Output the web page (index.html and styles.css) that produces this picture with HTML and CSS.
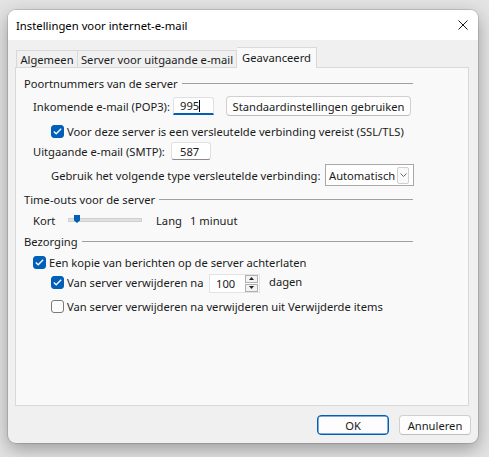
FILE: index.html
```html
<!DOCTYPE html>
<html lang="nl">
<head>
<meta charset="utf-8">
<title>Instellingen voor internet-e-mail</title>
<link rel="stylesheet" href="styles.css">
</head>
<body>
<div class="window">
  <div class="titlebar">
    <span class="title">Instellingen voor internet-e-mail</span>
    <svg class="close" width="10" height="10" viewBox="0 0 10 10"><path d="M0.5 0.5 L9.5 9.5 M9.5 0.5 L0.5 9.5" stroke="#1a1a1a" stroke-width="1"/></svg>
  </div>
  <div class="content">
    <div class="tabs">
      <div class="tab t1">Algemeen</div>
      <div class="tab t2">Server voor uitgaande e-mail</div>
      <div class="tab t3 selected">Geavanceerd</div>
    </div>
    <div class="panel">
      <div class="row h16 group"><span class="glabel">Poortnummers van de server</span><span class="gline"></span></div>
      <div class="row h30 ind1">
        <span class="lbl w140">Inkomende e-mail (POP3):</span>
        <span class="input focus">995<span class="caret"></span></span>
        <span class="btn std">Standaardinstellingen gebruiken</span>
      </div>
      <div class="row h20 ind2">
        <span class="cb checked"><svg width="9" height="7" viewBox="0 0 9 7"><path d="M0.8 3.6 L3.2 5.8 L8.2 0.8" fill="none" stroke="#fff" stroke-width="1.3"/></svg></span>
        <span>Voor deze server is een versleutelde verbinding vereist (SSL/TLS)</span>
      </div>
      <div class="row h20 ind1">
        <span class="lbl w138">Uitgaande e-mail (SMTP):</span>
        <span class="input plain">587</span>
      </div>
      <div class="row h28 ind2">
        <span class="lbl w274">Gebruik het volgende type versleutelde verbinding:</span>
        <span class="select">Automatisch<span class="arrow"><svg width="7" height="4" viewBox="0 0 7 4"><path d="M0.5 0.5 L3.5 3.5 L6.5 0.5" fill="none" stroke="#555" stroke-width="0.9"/></svg></span></span>
      </div>
      <div class="row h21 group"><span class="glabel">Time-outs voor de server</span><span class="gline"></span></div>
      <div class="row h20 ind1">
        <span class="lbl w35">Kort</span>
        <span class="slider"><span class="thumb"></span></span>
        <span class="lbl w34">Lang</span>
        <span>1 minuut</span>
      </div>
      <div class="row h23 group"><span class="glabel">Bezorging</span><span class="gline"></span></div>
      <div class="row h18 ind1">
        <span class="cb checked"><svg width="9" height="7" viewBox="0 0 9 7"><path d="M0.8 3.6 L3.2 5.8 L8.2 0.8" fill="none" stroke="#fff" stroke-width="1.3"/></svg></span>
        <span>Een kopie van berichten op de server achterlaten</span>
      </div>
      <div class="row h22 ind2">
        <span class="cb checked"><svg width="9" height="7" viewBox="0 0 9 7"><path d="M0.8 3.6 L3.2 5.8 L8.2 0.8" fill="none" stroke="#fff" stroke-width="1.3"/></svg></span>
        <span class="lbl w142">Van server verwijderen na</span>
        <span class="spin"><span class="spinval">100</span><span class="spinbtns"><span class="sb"><svg width="5" height="3" viewBox="0 0 5 3"><path d="M0 3 L2.5 0 L5 3Z" fill="#222"/></svg></span><span class="sb"><svg width="5" height="3" viewBox="0 0 5 3"><path d="M0 0 L2.5 3 L5 0Z" fill="#222"/></svg></span></span></span>
        <span class="dagen">dagen</span>
      </div>
      <div class="row h26 ind2">
        <span class="cb"></span>
        <span>Van server verwijderen na verwijderen uit Verwijderde items</span>
      </div>
    </div>
    <div class="footer">
      <span class="btn ok">OK</span>
      <span class="btn">Annuleren</span>
    </div>
  </div>
</div>
</body>
</html>
```

FILE: styles.css
```css
html, body {
  margin: 0;
  padding: 0;
}
body {
  background: #e3e3e3;
  width: 489px;
  height: 457px;
  overflow: hidden;
  font-family: "Noto Sans", "Liberation Sans", sans-serif;
  font-size: 11.2px;
  color: #1a1a1a;
}
.window {
  margin: 10px 0 0 8px;
  width: 470px;
  height: 433px;
  border-radius: 8px;
  overflow: hidden;
  background: #f0f0f0;
  box-shadow: 0 6px 18px rgba(0,0,0,0.32), 0 0 0 1px rgba(0,0,0,0.12);
  display: flex;
  flex-direction: column;
}
.titlebar {
  height: 30px;
  background: #ffffff;
  display: flex;
  align-items: center;
  padding-left: 8px;
  padding-right: 10px;
  flex-shrink: 0;
}
.title {
  flex: 1;
  color: #000;
  font-size: 11.3px;
}
.content {
  display: flex;
  flex-direction: column;
  padding: 7px 9px 0 7px;
}
.tabs {
  display: flex;
  align-items: flex-end;
  height: 20px;
  padding-left: 1px;
}
.tab {
  box-sizing: border-box;
  height: 17px;
  border: 1px solid #d9d9d9;
  border-bottom: none;
  background: #f0f0f0;
  display: flex;
  align-items: center;
  justify-content: center;
  white-space: nowrap;
  color: #1a1a1a;
}
.t1 { width: 62px; }
.t2 { width: 159px; border-left: none; }
.t3 { width: 80px; }
.tab.selected {
  height: 21px;
  background: #f9f9f9;
  margin-bottom: -1px;
  position: relative;
  z-index: 1;
  border-left: none;
  padding-bottom: 2px;
}
.panel {
  box-sizing: border-box;
  height: 339px;
  border: 1px solid #d9d9d9;
  background: #f9f9f9;
  padding: 7px 0 0 8px;
}
.row {
  display: flex;
  align-items: center;
  white-space: nowrap;
}
.h16 { height: 16px; }
.h18 { height: 18px; }
.h20 { height: 20px; }
.h21 { height: 21px; }
.h22 { height: 22px; }
.h23 { height: 23px; }
.h26 { height: 26px; }
.h28 { height: 28px; }
.h30 { height: 30px; }
.ind1 { padding-left: 9px; }
.ind2 { padding-left: 27px; }
.group {
  width: 389px;
}
.gline {
  flex: 1;
  height: 1px;
  background: #a0a0a0;
  margin-left: 4px;
}
.lbl { display: inline-block; }
.w34 { width: 34px; }
.w35 { width: 35px; }
.w138 { width: 138px; }
.w140 { width: 140px; }
.w142 { width: 142px; }
.w274 { width: 274px; }
.input {
  box-sizing: border-box;
  height: 18px;
  background: #fff;
  border: 1px solid #e0e0e0;
  border-bottom: 1px solid #8a8a8a;
  border-radius: 3px;
  display: flex;
  align-items: center;
  padding-left: 6px;
  color: #1a1a1a;
}
.input.focus {
  width: 41px;
  border-bottom: 2px solid #005fb8;
  border-radius: 3px 3px 0 0;
}
.input.plain { width: 40px; padding-left: 8px; }
.caret {
  display: inline-block;
  width: 1px;
  height: 12px;
  background: #000;
}
.btn {
  box-sizing: border-box;
  height: 20px;
  background: #fdfdfd;
  border: 1px solid #d0d0d0;
  border-bottom-color: #bdbdbd;
  border-radius: 4px;
  display: flex;
  align-items: center;
  justify-content: center;
  color: #1a1a1a;
  width: 72px;
}
.btn.std {
  width: 185px;
  margin-left: 12px;
}
.cb {
  box-sizing: border-box;
  width: 13px;
  height: 13px;
  border-radius: 3px;
  border: 1px solid #7a7a7a;
  background: #fcfcfc;
  display: flex;
  align-items: center;
  justify-content: center;
  margin-right: 3px;
  flex-shrink: 0;
}
.cb.checked {
  background: #005fb8;
  border-color: #005fb8;
}
.select {
  box-sizing: border-box;
  width: 89px;
  height: 22px;
  border: 1px solid #a8a8a8;
  background: #fff;
  display: flex;
  align-items: center;
  padding-left: 3px;
  padding-right: 4px;
  justify-content: space-between;
  color: #1a1a1a;
}
.arrow {
  box-sizing: border-box;
  width: 12px;
  height: 17px;
  border: 1px solid #d0d0d0;
  border-radius: 2px;
  display: flex;
  align-items: center;
  justify-content: center;
  background: #fafafa;
}
.slider {
  position: relative;
  box-sizing: border-box;
  width: 74px;
  height: 4px;
  background: #e0e0e0;
  border: 1px solid #d0d0d0;
  margin-right: 14px;
}
.thumb {
  position: absolute;
  left: 5px;
  top: -4px;
  width: 6px;
  height: 8px;
  background: #005fb8;
  clip-path: polygon(0 0, 100% 0, 100% 70%, 50% 100%, 0 70%);
}
.spin {
  box-sizing: border-box;
  width: 51px;
  height: 19px;
  background: #fff;
  border: 1px solid #e3e3e3;
  display: flex;
  align-items: center;
  justify-content: space-between;
  padding-left: 6px;
  padding-right: 1px;
  margin-top: 2px;
}
.spinval { margin-top: 1px; }
.spinbtns {
  display: flex;
  flex-direction: column;
  gap: 1px;
}
.sb {
  box-sizing: border-box;
  width: 13px;
  height: 8px;
  border: 1px solid #b0b0b0;
  background: #f3f3f3;
  display: flex;
  align-items: center;
  justify-content: center;
}
.dagen { margin-left: 9px; margin-top: -2px; }
.footer {
  display: flex;
  justify-content: flex-end;
  gap: 10px;
  margin-top: 9px;
  margin-right: -2px;
}
.btn.ok {
  border: 1px solid #005fb8;
  box-shadow: inset 0 0 0 0.5px #005fb8;
}
```
